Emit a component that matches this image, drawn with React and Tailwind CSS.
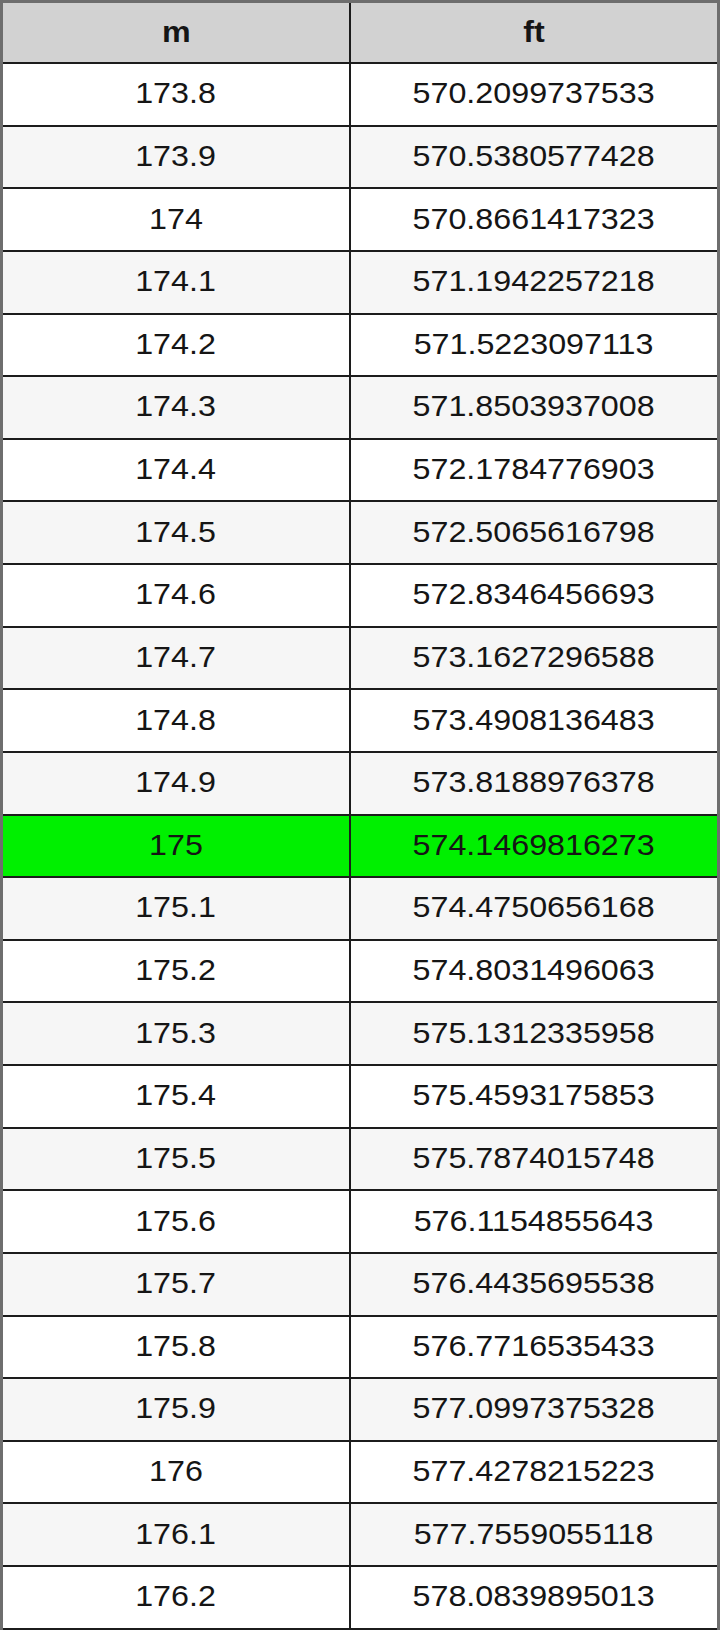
import React from "react";

const rows = [
  ["173.8", "570.2099737533"],
  ["173.9", "570.5380577428"],
  ["174", "570.8661417323"],
  ["174.1", "571.1942257218"],
  ["174.2", "571.5223097113"],
  ["174.3", "571.8503937008"],
  ["174.4", "572.1784776903"],
  ["174.5", "572.5065616798"],
  ["174.6", "572.8346456693"],
  ["174.7", "573.1627296588"],
  ["174.8", "573.4908136483"],
  ["174.9", "573.8188976378"],
  ["175", "574.1469816273"],
  ["175.1", "574.4750656168"],
  ["175.2", "574.8031496063"],
  ["175.3", "575.1312335958"],
  ["175.4", "575.4593175853"],
  ["175.5", "575.7874015748"],
  ["175.6", "576.1154855643"],
  ["175.7", "576.4435695538"],
  ["175.8", "576.7716535433"],
  ["175.9", "577.0997375328"],
  ["176", "577.4278215223"],
  ["176.1", "577.7559055118"],
  ["176.2", "578.0839895013"],
];

const Cell = ({ children, left }) => (
  <div
    className={`flex items-center justify-center pb-[3px] ${
      left ? "w-[348px] border-r-2 border-[#1c1c1c]" : "flex-1"
    }`}
  >
    <span className="inline-block scale-x-[1.075]">{children}</span>
  </div>
);

const Row = ({ m, ft, index }) => {
  const highlight = m === "175";
  const bg = highlight
    ? "bg-[#00f000]"
    : index % 2 === 0
    ? "bg-white"
    : "bg-[#f6f6f6]";
  return (
    <div className={`flex h-[62.64px] border-b-2 border-[#1c1c1c] ${bg}`}>
      <Cell left>{m}</Cell>
      <Cell>{ft}</Cell>
    </div>
  );
};

const App = () => {
  return (
    <div className="w-[720px] h-[1636px] bg-white">
      <div
        className="border-t-[3px] border-x-[3px] border-[#6e6e6e] text-[30px] text-[#151515]"
        style={{ fontFamily: '"Liberation Sans", Arial, sans-serif' }}
      >
        <div className="flex h-[61px] border-b-2 border-[#1c1c1c] bg-[#d2d2d2] font-bold">
          <Cell left>m</Cell>
          <Cell>ft</Cell>
        </div>
        {rows.map(([m, ft], i) => (
          <Row key={m} m={m} ft={ft} index={i} />
        ))}
      </div>
    </div>
  );
};

export default App;
